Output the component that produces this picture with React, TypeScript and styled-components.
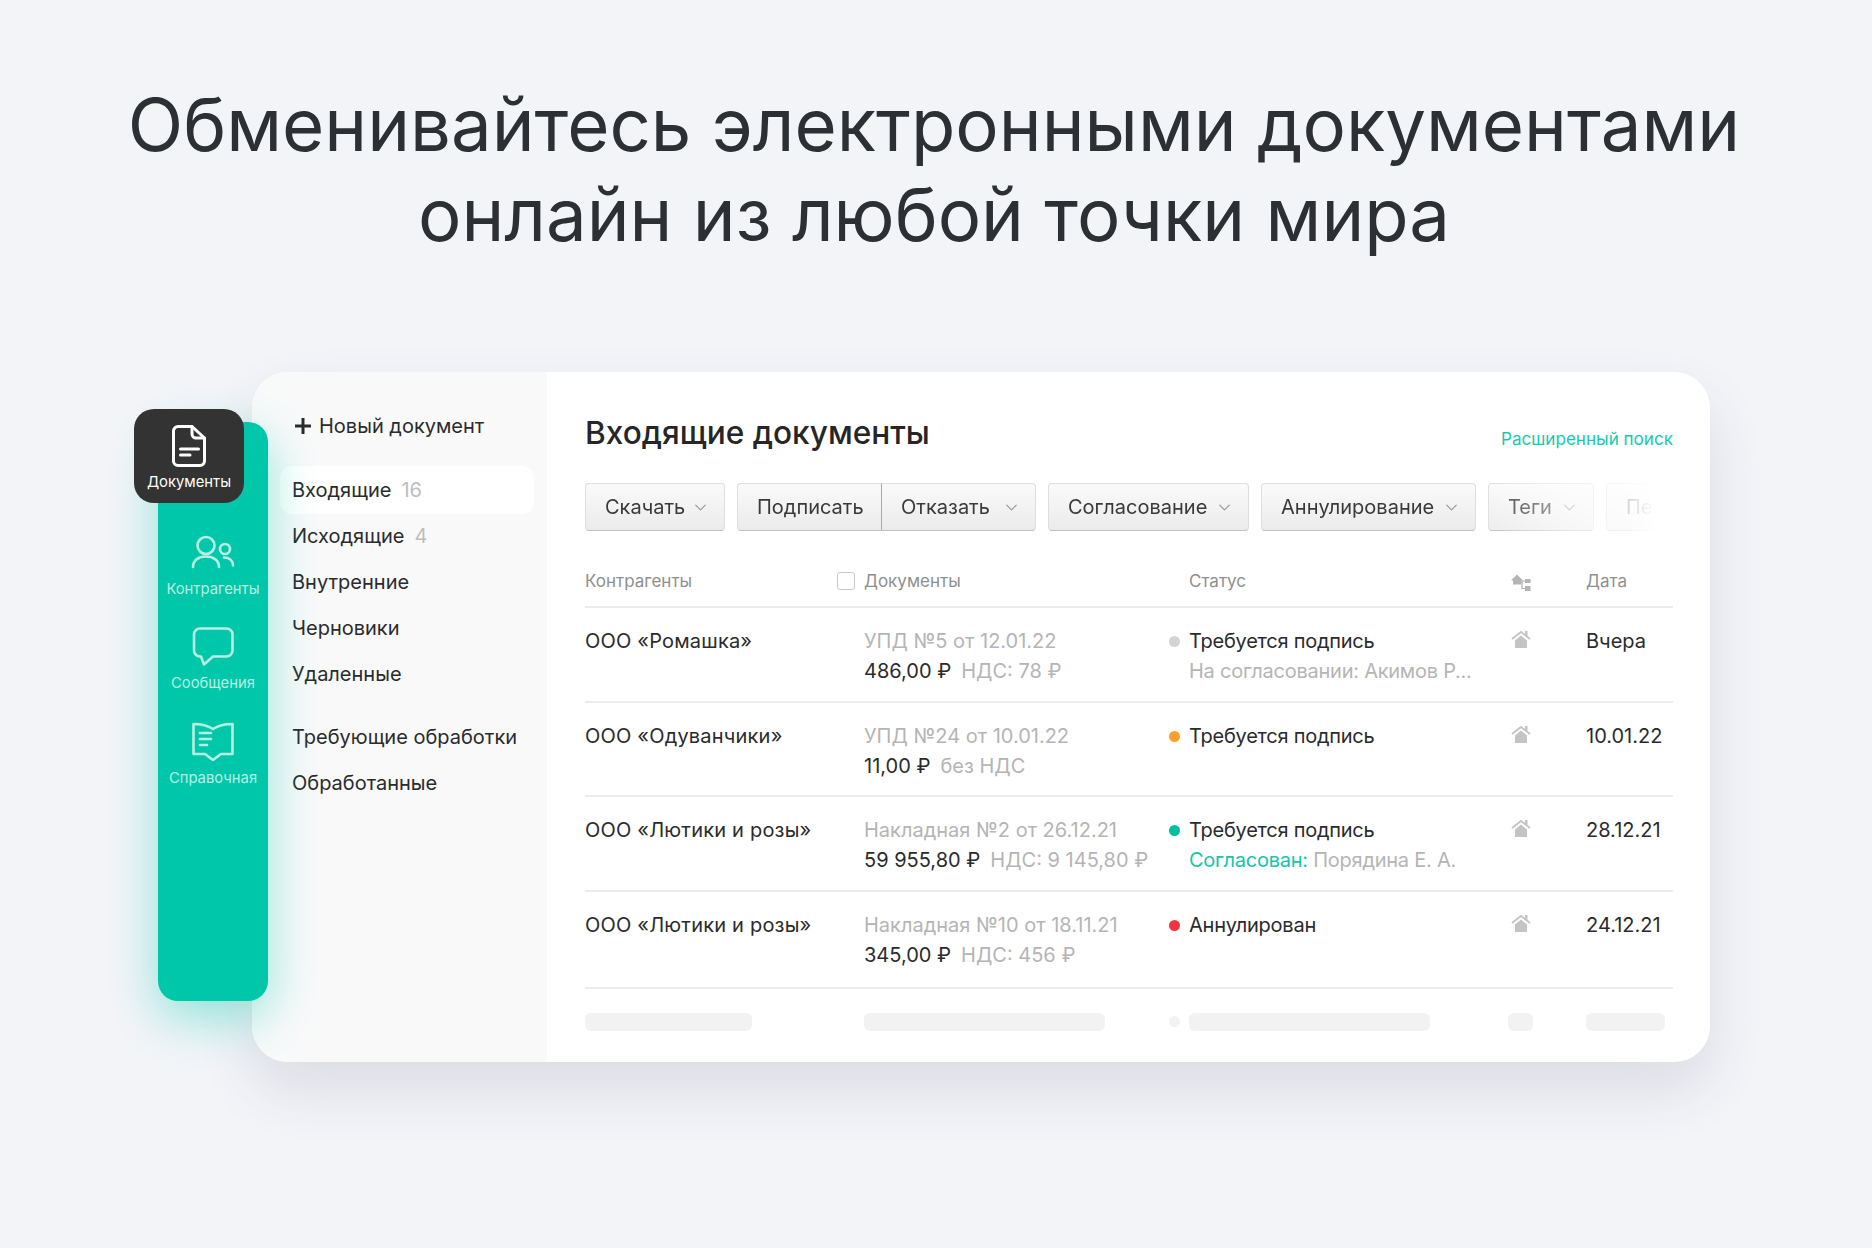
import styled, { createGlobalStyle } from 'styled-components';
import { ChevronDown } from 'lucide-react';

const GlobalStyle = createGlobalStyle`
  * { box-sizing: border-box; }
  html, body { margin: 0; padding: 0; }
  body {
    background: #f3f4f8;
    font-family: Inter, "Noto Sans", sans-serif;
    color: #2a2b2d;
  }
`;

const Page = styled.div`
  width: 1872px;
  height: 1248px;
  overflow: hidden;
  background: #f3f4f8;
  padding-top: 80px;
`;

const Headline = styled.h1`
  margin: 0 0 113px;
  padding-right: 4px;
  text-align: center;
  font-size: 72.5px;
  line-height: 89.5px;
  font-weight: 400;
  color: #2c3035;
`;

const Stage = styled.div`
  position: relative;
  width: 1458px;
  margin-left: 252px;
`;

const Card = styled.div`
  display: flex;
  height: 690px;
  border-radius: 36px;
  overflow: hidden;
  background: #fff;
`;

const CardShadow = styled.div`
  border-radius: 36px;
  box-shadow: 0 28px 56px rgba(50, 60, 90, 0.12);
`;

const Rail = styled.nav`
  position: absolute;
  left: -94px;
  top: 50px;
  width: 110px;
  height: 579px;
  border-radius: 20px;
  background: #00c7aa;
  box-shadow: 0 16px 50px rgba(0, 205, 175, 0.42);
  display: flex;
  flex-direction: column;
`;

const ActiveTile = styled.a`
  width: 110px;
  height: 94px;
  margin: -13px 0 13px -24px;
  padding-top: 16px;
  border-radius: 20px;
  background: #333;
  color: #fff;
  display: flex;
  flex-direction: column;
  align-items: center;
  gap: 6px;
`;

const RailItem = styled.a`
  height: 94.5px;
  padding-bottom: 13px;
  color: #b7f0e3;
  display: flex;
  flex-direction: column;
  justify-content: flex-end;
  align-items: center;
  gap: 6px;
`;

const RailLabel = styled.span`
  font-size: 14.8px;
  line-height: 18px;
  white-space: nowrap;
`;

const Side = styled.aside`
  width: 295px;
  flex-shrink: 0;
  background: #f9f9fa;
  padding: 36px 13px 0 28px;
`;

const NewDoc = styled.div`
  display: flex;
  align-items: center;
  gap: 8px;
  height: 36px;
  margin: 0 0 22px 15px;
  font-size: 20px;
`;

const SideItem = styled.div<{ $active?: boolean; $gap?: boolean }>`
  height: ${({ $active }) => ($active ? '48px' : '46px')};
  margin-top: ${({ $gap }) => ($gap ? '17px' : '0')};
  margin-bottom: ${({ $active }) => ($active ? '-1.5px' : '0')};
  padding-left: 12px;
  display: flex;
  align-items: center;
  gap: 10px;
  font-size: 20px;
  border-radius: 12px;
  background: ${({ $active }) => ($active ? '#fff' : 'transparent')};
`;

const Count = styled.span`
  color: #bdbdbd;
`;

const Main = styled.main`
  flex: 1;
  min-width: 0;
  padding: 38px 37px 0 38px;
`;

const TitleRow = styled.div`
  display: flex;
  justify-content: space-between;
  align-items: center;
  height: 46px;
  margin-bottom: 27px;
`;

const Title = styled.h2`
  margin: 0 0 2px;
  font-size: 31.6px;
  font-weight: 500;
  color: #262626;
`;

const SearchLink = styled.a`
  font-size: 17.1px;
  color: #14cbae;
  padding-top: 10px;
  white-space: nowrap;
`;

const TOOLBAR_FADE = 'linear-gradient(to right, #000 82%, rgba(0, 0, 0, 0.45) 90%, rgba(0, 0, 0, 0.2) 96%, transparent 98.500%)';

const Toolbar = styled.div`
  display: flex;
  gap: 12px;
  overflow: hidden;
  -webkit-mask-image: ${TOOLBAR_FADE};
  mask-image: ${TOOLBAR_FADE};
`;

const SplitGroup = styled.div`
  display: flex;
  flex-shrink: 0;
`;

const ToolButton = styled.button<{ $w: number }>`
  flex-shrink: 0;
  width: ${({ $w }) => $w}px;
  height: 48px;
  padding: 0 0 0 19px;
  display: flex;
  align-items: center;
  justify-content: space-between;
  border: 1px solid #dedede;
  border-bottom-color: #c2c2c2;
  border-radius: 4px;
  background: linear-gradient(#fafafa, #ebebeb);
  font: inherit;
  font-size: 20px;
  color: #3a3a3a;
  svg { margin-right: 14px; color: #9c9c9c; }
`;

const LeftButton = styled(ToolButton)`
  border-radius: 4px 0 0 4px;
  border-right-color: #a9a9a9;
`;

const RightButton = styled(ToolButton)`
  border-radius: 0 4px 4px 0;
  border-left: 0;
`;

const COLUMNS = '279px 304px 340px 78px 87px';

const HeadRow = styled.div`
  display: grid;
  grid-template-columns: ${COLUMNS};
  align-items: center;
  height: 77px;
  padding-top: 24px;
  border-bottom: 2px solid #ececec;
  font-size: 17px;
  color: #8f8f8f;
`;

const HeadDocs = styled.div`
  display: flex;
  align-items: center;
  gap: 9px;
  margin-left: -27px;
`;

const CheckBox = styled.span`
  width: 18px;
  height: 18px;
  border: 1.5px solid #c8c8c8;
  border-radius: 3px;
`;

const HeadStatus = styled.div`
  padding-left: 21px;
`;

const Row = styled.div<{ $tall?: boolean }>`
  display: grid;
  grid-template-columns: ${COLUMNS};
  height: ${({ $tall }) => ($tall ? '96.500px' : '94.700px')};
  padding-top: 18px;
  border-bottom: 2px solid #ececec;
  font-size: 20px;
  line-height: 30px;
`;

const OrgCell = styled.div`
  letter-spacing: 0.2px;
`;

const Muted = styled.span`
  color: #b5b5b5;
`;

const Amount = styled.span`
  margin-right: 10px;
`;

const StatusCell = styled.div`
  display: grid;
  grid-template-columns: 21px 1fr;
  white-space: nowrap;
  letter-spacing: -0.25px;
`;

const Dot = styled.i<{ $c: string }>`
  margin: 10px 0 0 1px;
  width: 11px;
  height: 11px;
  border-radius: 50%;
  background: ${({ $c }) => $c};
`;

const Agreed = styled.span`
  color: #14c7a9;
`;

const HouseCell = styled.div`
  padding: 0 0 0 3px;
  line-height: 0;
  svg { margin-top: 4px; }
`;

const SkeletonRow = styled.div`
  display: grid;
  grid-template-columns: ${COLUMNS};
  padding-top: 24px;
`;

const Skeleton = styled.div<{ $w: number }>`
  width: ${({ $w }) => $w}px;
  height: 18px;
  border-radius: 6px;
  background: #f2f2f3;
`;

const SkeletonStatus = styled.div`
  display: grid;
  grid-template-columns: 21px 1fr;
  align-items: center;
`;

function DocIcon() {
  return (
    <svg width="44" height="42" viewBox="0 0 44 42" fill="none" stroke="currentColor" strokeWidth="3" strokeLinecap="round" strokeLinejoin="round">
      <path d="M11 1.5H25L37.5 13V36A4.5 4.5 0 0 1 33 40.5H11A4.5 4.5 0 0 1 6.5 36V6A4.5 4.5 0 0 1 11 1.5Z" />
      <path d="M25 1.5V9A4 4 0 0 0 29 13H37.5" />
      <path d="M13.5 24H31.5M13.5 30H23" />
    </svg>
  );
}

function PeopleIcon() {
  return (
    <svg width="44" height="42" viewBox="0 0 44 42" fill="none" stroke="currentColor" strokeWidth="2.6" strokeLinecap="round">
      <circle cx="15" cy="13.5" r="8.5" />
      <circle cx="34" cy="17" r="5" />
      <path d="M2 35C2 28 8 24.5 15 24.5S28 28 28 35" />
      <path d="M33 25.5C38.5 25.5 42 28.500 42 33.500" />
    </svg>
  );
}

function ChatIcon() {
  return (
    <svg width="44" height="42" viewBox="0 0 44 42" fill="none" stroke="currentColor" strokeWidth="2.6" strokeLinejoin="round">
      <path d="M9 2.500H35.500A6 6 0 0 1 41.500 8.500V24.500A6 6 0 0 1 35.500 30.500H22L13 38.500L10 30.500H9A6 6 0 0 1 3 24.500V8.500A6 6 0 0 1 9 2.500Z" />
    </svg>
  );
}

function BookIcon() {
  return (
    <svg width="44" height="42" viewBox="0 0 44 42" fill="none" stroke="currentColor" strokeWidth="2.6" strokeLinecap="round" strokeLinejoin="round">
      <path d="M2.500 3C10 3 16 4 22 8C28 4 34 3 41.500 3V33H30L22 39L14 33H2.500Z" />
      <path d="M9 12H20M9 18H20M9 24H16" />
    </svg>
  );
}

function HouseIcon() {
  return (
    <svg width="20" height="18" viewBox="0 0 20 18" fill="#c4c4c4">
      <path d="M4 10.500L10 5.500L16 10.500V18H4Z" />
      <path d="M1 9L10 2L19 9" fill="none" stroke="#c4c4c4" strokeWidth="1.800" />
      <rect x="14" y="1" width="2.500" height="5" />
    </svg>
  );
}

function TreeIcon() {
  return (
    <svg width="20" height="17" viewBox="0 0 20 17" fill="#b4b4b4">
      <path d="M0 6.500L6 0.500L12 6.500H10.500V10.500H2V6.500Z" />
      <rect x="14" y="5" width="5.500" height="4" />
      <rect x="14" y="12" width="5.500" height="5" />
      <path d="M11 7H14M11 7V14.500H14" fill="none" stroke="#b4b4b4" strokeWidth="1.200" />
    </svg>
  );
}

const Chevron = () => <ChevronDown size={19} strokeWidth={1.6} />;

const ROWS = [
  {
    org: 'ООО «Ромашка»',
    doc: 'УПД №5 от 12.01.22',
    sum: '486,00 ₽',
    tax: 'НДС: 78 ₽',
    dot: '#d4d4d4',
    status: 'Требуется подпись',
    sub: <Muted>На согласовании: Акимов Р...</Muted>,
    date: 'Вчера',
  },
  {
    org: 'ООО «Одуванчики»',
    doc: 'УПД №24 от 10.01.22',
    sum: '11,00 ₽',
    tax: 'без НДС',
    dot: '#ff9f2e',
    status: 'Требуется подпись',
    sub: null,
    date: '10.01.22',
  },
  {
    org: 'ООО «Лютики и розы»',
    doc: 'Накладная №2 от 26.12.21',
    sum: '59 955,80 ₽',
    tax: 'НДС: 9 145,80 ₽',
    dot: '#00bfa0',
    status: 'Требуется подпись',
    sub: (
      <>
        <Agreed>Согласован:</Agreed> <Muted>Порядина Е. А.</Muted>
      </>
    ),
    date: '28.12.21',
  },
  {
    org: 'ООО «Лютики и розы»',
    doc: 'Накладная №10 от 18.11.21',
    sum: '345,00 ₽',
    tax: 'НДС: 456 ₽',
    dot: '#f5333f',
    status: 'Аннулирован',
    sub: null,
    date: '24.12.21',
  },
];

export default function App() {
  return (
    <Page>
      <GlobalStyle />
      <Headline>
        Обменивайтесь электронными документами
        <br />
        онлайн из любой точки мира
      </Headline>
      <Stage>
        <CardShadow>
          <Card>
            <Side>
              <NewDoc>
                <svg width="16" height="16" viewBox="0 0 16 16" stroke="#2a2b2d" strokeWidth="3">
                  <path d="M8 0V16M0 8H16" />
                </svg>
                Новый документ
              </NewDoc>
              <SideItem $active>
                Входящие <Count>16</Count>
              </SideItem>
              <SideItem>
                Исходящие <Count>4</Count>
              </SideItem>
              <SideItem>Внутренние</SideItem>
              <SideItem>Черновики</SideItem>
              <SideItem>Удаленные</SideItem>
              <SideItem $gap>Требующие обработки</SideItem>
              <SideItem>Обработанные</SideItem>
            </Side>
            <Main>
              <TitleRow>
                <Title>Входящие документы</Title>
                <SearchLink>Расширенный поиск</SearchLink>
              </TitleRow>
              <Toolbar>
                <ToolButton $w={140}>Скачать <Chevron /></ToolButton>
                <SplitGroup>
                  <LeftButton $w={145}>Подписать</LeftButton>
                  <RightButton $w={154}>Отказать <Chevron /></RightButton>
                </SplitGroup>
                <ToolButton $w={201}>Согласование <Chevron /></ToolButton>
                <ToolButton $w={215}>Аннулирование <Chevron /></ToolButton>
                <ToolButton $w={106}>Теги <Chevron /></ToolButton>
                <ToolButton $w={140}>Перенести</ToolButton>
              </Toolbar>
              <HeadRow>
                <div>Контрагенты</div>
                <HeadDocs>
                  <CheckBox />
                  Документы
                </HeadDocs>
                <HeadStatus>Статус</HeadStatus>
                <HouseCell>
                  <TreeIcon />
                </HouseCell>
                <div>Дата</div>
              </HeadRow>
              {ROWS.map((r, i) => (
                <Row key={r.doc} $tall={i === ROWS.length - 1}>
                  <OrgCell>{r.org}</OrgCell>
                  <div>
                    <Muted>{r.doc}</Muted>
                    <br />
                    <Amount>{r.sum}</Amount>
                    <Muted>{r.tax}</Muted>
                  </div>
                  <StatusCell>
                    <Dot $c={r.dot} />
                    <div>
                      {r.status}
                      <br />
                      {r.sub}
                    </div>
                  </StatusCell>
                  <HouseCell>
                    <HouseIcon />
                  </HouseCell>
                  <div>{r.date}</div>
                </Row>
              ))}
              <SkeletonRow>
                <Skeleton $w={167} />
                <Skeleton $w={241} />
                <SkeletonStatus>
                  <Dot $c="#f2f2f3" style={{ marginTop: 0 }} />
                  <Skeleton $w={241} />
                </SkeletonStatus>
                <Skeleton $w={25} />
                <Skeleton $w={79} />
              </SkeletonRow>
            </Main>
          </Card>
        </CardShadow>
        <Rail>
          <ActiveTile>
            <DocIcon />
            <RailLabel>Документы</RailLabel>
          </ActiveTile>
          <RailItem>
            <PeopleIcon />
            <RailLabel>Контрагенты</RailLabel>
          </RailItem>
          <RailItem>
            <ChatIcon />
            <RailLabel>Сообщения</RailLabel>
          </RailItem>
          <RailItem>
            <BookIcon />
            <RailLabel>Справочная</RailLabel>
          </RailItem>
        </Rail>
      </Stage>
    </Page>
  );
}
